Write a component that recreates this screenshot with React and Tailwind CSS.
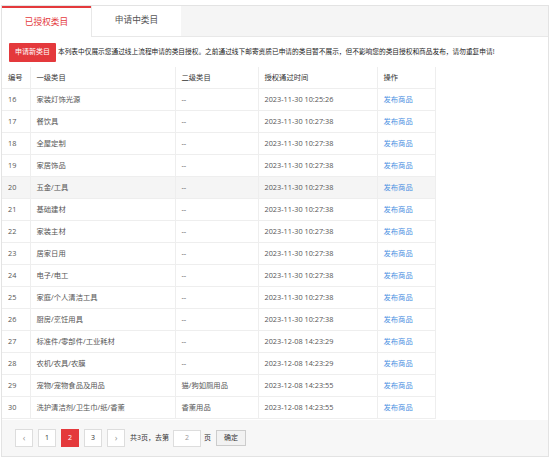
import React from "react";

const rows = [
  ["16", "家装灯饰光源", "--", "2023-11-30 10:25:26"],
  ["17", "餐饮具", "--", "2023-11-30 10:27:38"],
  ["18", "全屋定制", "--", "2023-11-30 10:27:38"],
  ["19", "家居饰品", "--", "2023-11-30 10:27:38"],
  ["20", "五金/工具", "--", "2023-11-30 10:27:38"],
  ["21", "基础建材", "--", "2023-11-30 10:27:38"],
  ["22", "家装主材", "--", "2023-11-30 10:27:38"],
  ["23", "居家日用", "--", "2023-11-30 10:27:38"],
  ["24", "电子/电工", "--", "2023-11-30 10:27:38"],
  ["25", "家庭/个人清洁工具", "--", "2023-11-30 10:27:38"],
  ["26", "厨房/烹饪用具", "--", "2023-11-30 10:27:38"],
  ["27", "标准件/零部件/工业耗材", "--", "2023-12-08 14:23:29"],
  ["28", "农机/农具/农膜", "--", "2023-12-08 14:23:29"],
  ["29", "宠物/宠物食品及用品", "猫/狗如厕用品", "2023-12-08 14:23:55"],
  ["30", "洗护清洁剂/卫生巾/纸/香薰", "香薰用品", "2023-12-08 14:23:55"],
];

const font = { fontFamily: '"Open Sans", "Noto Sans CJK SC", sans-serif' };

export default function App() {
  return (
    <div className="w-[550px] h-[459px] bg-white pt-[5px] pl-[1px]" style={font}>
      <div className="w-[548px] h-[452px] border border-[#e3e3e3] flex flex-col">
        {/* tabs */}
        <div className="h-[31px] bg-[#f5f5f5] flex shrink-0">
          <div className="w-[89px] h-full bg-white border-t-2 border-[#e4393c] flex items-center justify-center text-[8.7px] text-[#e4393c]">
            已授权类目
          </div>
          <div className="w-[90px] h-full bg-white border-l border-b border-[#e8e8e8] flex items-center justify-center text-[8.7px] text-[#555]">
            申请中类目
          </div>
          <div className="flex-1 border-b border-[#e8e8e8]"></div>
        </div>
        {/* content */}
        <div className="flex-1 bg-white flex flex-col">
          <div className="flex items-center pl-[7px] pt-[5px] h-[25px]">
            <div className="w-[47px] h-[19px] bg-[#e4393c] rounded-[1px] text-white text-[7px] flex items-center justify-center">
              申请新类目
            </div>
            <div className="ml-[2px] text-[6.7px] text-[#222] whitespace-nowrap">
              本列表中仅展示您通过线上流程申请的类目授权。之前通过线下邮寄资质已申请的类目暂不展示，但不影响您的类目授权和商品发布，请勿重复申请!
            </div>
          </div>
          <table className="mt-[5px] border-collapse text-[7.3px] w-[433px] table-fixed">
            <colgroup>
              <col className="w-[28px]" />
              <col className="w-[145px]" />
              <col className="w-[83px]" />
              <col className="w-[119px]" />
              <col className="w-[58px]" />
            </colgroup>
            <thead>
              <tr className="h-[21px] text-[#333]">
                <th className="font-normal text-left pl-[6px] border-r border-b border-[#eeeeee]">编号</th>
                <th className="font-normal text-left pl-[6px] border-r border-b border-[#eeeeee]">一级类目</th>
                <th className="font-normal text-left pl-[6px] border-r border-b border-[#eeeeee]">二级类目</th>
                <th className="font-normal text-left pl-[6px] border-r border-b border-[#eeeeee]">授权通过时间</th>
                <th className="font-normal text-left pl-[6px] border-r border-b border-[#eeeeee]">操作</th>
              </tr>
            </thead>
            <tbody>
              {rows.map((r) => (
                <tr key={r[0]} className={"h-[22px] text-[#555] " + (r[0] === "20" ? "bg-[#f5f5f5]" : "")}>
                  <td className="pl-[6px] border-r border-b border-[#eeeeee]">{r[0]}</td>
                  <td className="pl-[6px] border-r border-b border-[#eeeeee] whitespace-nowrap">{r[1]}</td>
                  <td className="pl-[6px] border-r border-b border-[#eeeeee] whitespace-nowrap">{r[2]}</td>
                  <td className="pl-[6px] border-r border-b border-[#eeeeee] whitespace-nowrap">{r[3]}</td>
                  <td className="pl-[6px] border-r border-b border-[#eeeeee] text-[#4a90e2]">发布商品</td>
                </tr>
              ))}
            </tbody>
          </table>
        </div>
        {/* pagination */}
        <div className="h-[36px] shrink-0 bg-[#f7f7f7] flex items-center pl-[13px] text-[7px] text-[#333]">
          <div className="flex gap-[5px]">
            <div className="w-[18px] h-[18px] border border-[#ddd] bg-white flex items-center justify-center text-[#999] text-[9px]">‹</div>
            <div className="w-[18px] h-[18px] border border-[#ddd] bg-white flex items-center justify-center text-[#333]">1</div>
            <div className="w-[18px] h-[18px] border border-[#e4393c] bg-[#e4393c] flex items-center justify-center text-white">2</div>
            <div className="w-[18px] h-[18px] border border-[#ddd] bg-white flex items-center justify-center text-[#333]">3</div>
            <div className="w-[18px] h-[18px] border border-[#ddd] bg-white flex items-center justify-center text-[#999] text-[9px]">›</div>
          </div>
          <span className="ml-[5px]">共3页，去第</span>
          <div className="ml-[4px] w-[28px] h-[17px] border border-[#ddd] bg-white flex items-center justify-center text-[#999]">2</div>
          <span className="ml-[3px]">页</span>
          <div className="ml-[5px] w-[30px] h-[16px] border border-[#ccc] bg-[#f2f2f2] flex items-center justify-center text-[#333]">确定</div>
        </div>
      </div>
    </div>
  );
}
